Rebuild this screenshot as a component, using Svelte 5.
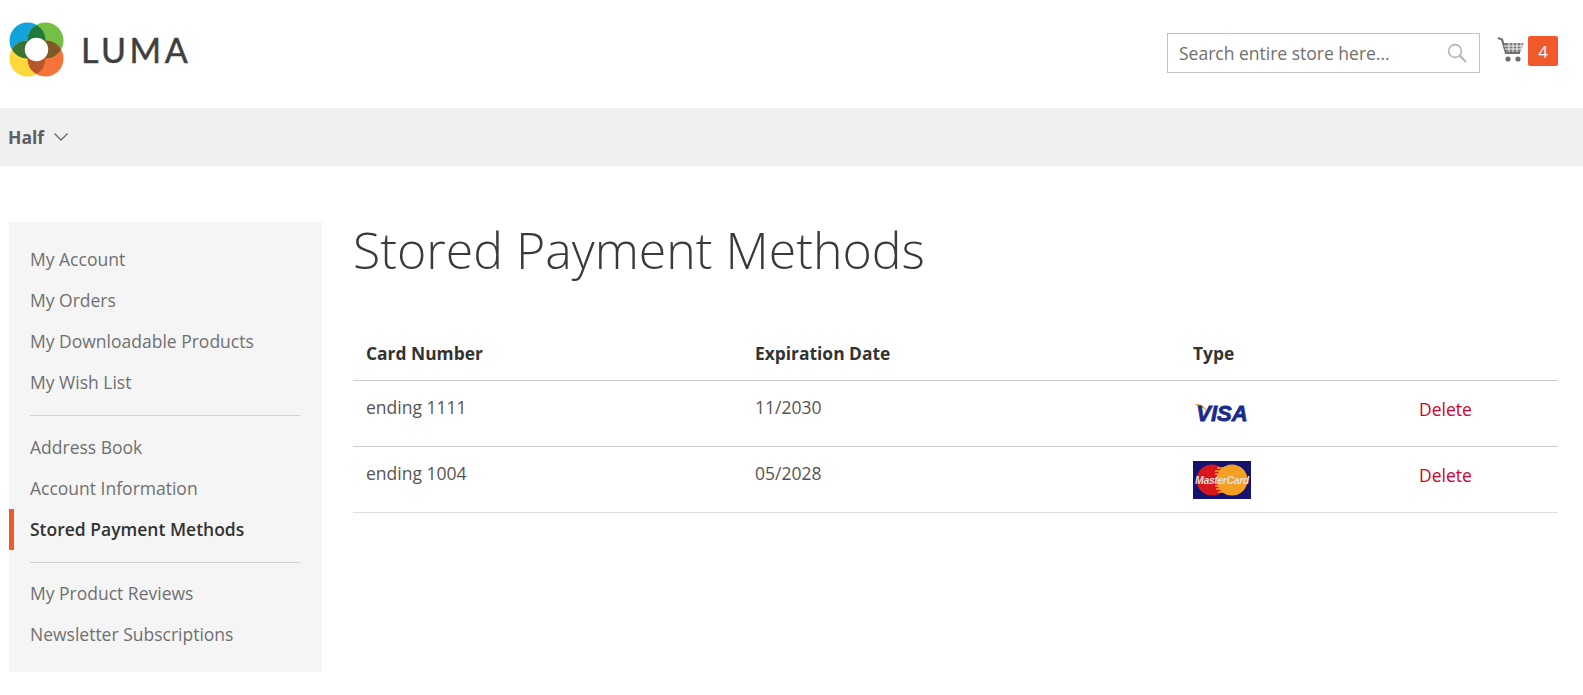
<script>
	const groups = [
		['My Account', 'My Orders', 'My Downloadable Products', 'My Wish List'],
		['Address Book', 'Account Information', 'Stored Payment Methods'],
		['My Product Reviews', 'Newsletter Subscriptions']
	]
	const current = 'Stored Payment Methods'

	const cards = [
		{ number: 'ending 1111', expires: '11/2030', type: 'visa' },
		{ number: 'ending 1004', expires: '05/2028', type: 'mc' }
	]
</script>

<header class="top">
	<a class="logo" href="#home">
		<svg class="mark" width="55" height="55" viewBox="0 0 55 55" aria-hidden="true">
			<circle cx="18.5" cy="18.5" r="18" fill="#12a3dc" />
			<circle cx="36.5" cy="18.5" r="18" fill="#74c044" />
			<circle cx="18.5" cy="36.5" r="18" fill="#fdd83a" />
			<circle cx="36.5" cy="36.5" r="18" fill="#f6733c" />
			<!-- overlaps between neighbouring circles -->
			<path d="M27.5 2.9 A18 18 0 0 1 27.5 34.1 A18 18 0 0 1 27.5 2.9 Z" fill="#1f7a3c" />
			<path d="M2.9 27.5 A18 18 0 0 1 34.1 27.5 A18 18 0 0 1 2.9 27.5 Z" fill="#3a7434" />
			<path d="M20.9 27.5 A18 18 0 0 1 52.1 27.5 A18 18 0 0 1 20.9 27.5 Z" fill="#7d5a28" />
			<path d="M27.5 20.9 A18 18 0 0 1 27.5 52.1 A18 18 0 0 1 27.5 20.9 Z" fill="#b8552a" />
			<circle cx="27.5" cy="27.5" r="11.7" fill="#fff" />
		</svg>
		<span class="wordmark">LUMA</span>
	</a>

	<div class="tools">
		<div class="search">
			<span class="placeholder">Search entire store here...</span>
			<svg width="22" height="22" viewBox="0 0 22 22" fill="none" stroke="#b5b5b5" stroke-width="1.6" aria-hidden="true">
				<circle cx="9" cy="9" r="6.4" />
				<path d="M13.8 13.8 L20 20" stroke-width="2" />
			</svg>
		</div>
		<svg class="cart" width="28" height="28" viewBox="0 0 28 28" aria-hidden="true">
			<path d="M1 2 L5 3.5 L9 17 H23" fill="none" stroke="#6f6f6f" stroke-width="2.2" />
			<path d="M6.5 7 H26.5 L24 16 H9 Z" fill="#7d7d7d" />
			<path d="M7 10 H26 M8 13 H25 M12 7 V16 M16 7 V16 M20 7 V16 M24 7 V16" stroke="#fff" stroke-width="0.9" />
			<circle cx="11" cy="23" r="2.6" fill="#6f6f6f" />
			<circle cx="21" cy="23" r="2.6" fill="#6f6f6f" />
		</svg>
		<span class="badge">4</span>
	</div>
</header>

<nav class="menu">
	<span class="menu-item">Half</span>
	<svg width="16" height="10" viewBox="0 0 16 10" fill="none" stroke="#666" stroke-width="1.3" aria-hidden="true">
		<path d="M1.5 1.5 L8 8 L14.5 1.5" />
	</svg>
</nav>

<main class="page">
	<aside class="sidebar">
		{#each groups as group, i}
			{#if i > 0}<hr />{/if}
			<ul>
				{#each group as item}
					<li class:current={item === current}>{item}</li>
				{/each}
			</ul>
		{/each}
	</aside>

	<section class="content">
		<h1>Stored Payment Methods</h1>
		<table>
			<thead>
				<tr>
					<th class="c1">Card Number</th>
					<th class="c2">Expiration Date</th>
					<th class="c3">Type</th>
					<th></th>
				</tr>
			</thead>
			<tbody>
				{#each cards as card}
					<tr>
						<td>{card.number}</td>
						<td>{card.expires}</td>
						<td class="type">
							{#if card.type === 'visa'}
								<svg width="58" height="38" viewBox="0 0 58 38" role="img" aria-label="Visa">
									<path d="M2 9 Q11 8 15 18 Q11 12 5 11.5 Z" fill="#e9a42c" />
									<text x="29" y="26" text-anchor="middle" class="visa">VISA</text>
								</svg>
							{:else}
								<svg width="58" height="38" viewBox="0 0 58 38" role="img" aria-label="MasterCard">
									<rect width="58" height="38" fill="#14146e" />
									<circle cx="19" cy="19" r="15.5" fill="#d7161d" />
									<circle cx="39" cy="19" r="15.5" fill="#f4a024" />
									<path d="M24 7 H34 M22 10 H35 M22 13 H36 M22 25 H36 M23 28 H35 M25 31 H33" stroke="#f4a024" stroke-width="1.4" />
									<text x="29" y="23" text-anchor="middle" class="mc">MasterCard</text>
								</svg>
							{/if}
						</td>
						<td class="action"><a href="#delete">Delete</a></td>
					</tr>
				{/each}
			</tbody>
		</table>
	</section>
</main>

<style>
	:global(body) {
		margin: 0;
		background: #fff;
		font-family: "Open Sans", sans-serif;
		color: #333;
	}

	.top {
		height: 108px;
		display: flex;
		align-items: center;
		justify-content: space-between;
		padding: 0 25px 0 9px;
		box-sizing: border-box;
	}
	.logo {
		display: flex;
		align-items: center;
		gap: 17px;
		text-decoration: none;
		margin-top: -10px;
	}
	.wordmark {
		font-family: Lato, sans-serif;
		font-size: 34px;
		font-weight: 400;
		letter-spacing: 3.5px;
		color: #3f3f3f;
		-webkit-text-stroke: 0.5px #3f3f3f;
	}
	.tools {
		display: flex;
		align-items: center;
		margin-top: -2px;
	}
	.search {
		width: 313px;
		height: 40px;
		box-sizing: border-box;
		border: 1px solid #c2c2c2;
		display: flex;
		align-items: center;
		justify-content: space-between;
		padding: 0 11px;
	}
	.placeholder {
		font-size: 17.5px;
		color: #6f6f6f;
	}
	.cart {
		margin-left: 17px;
		margin-top: -6px;
	}
	.badge {
		width: 30px;
		height: 30px;
		margin-left: 3px;
		margin-top: -4px;
		border-radius: 2px;
		background: #f1582a;
		color: #fff;
		font-size: 17px;
		display: flex;
		align-items: center;
		justify-content: center;
	}

	.menu {
		height: 58px;
		background: #f0f0f0;
		display: flex;
		align-items: center;
		gap: 9px;
		padding-left: 8px;
	}
	.menu-item {
		font-size: 17.5px;
		font-weight: 700;
		color: #5e5e5e;
	}

	.page {
		display: flex;
		padding: 56px 25px 0 9px;
		gap: 31px;
		align-items: flex-start;
	}

	.sidebar {
		flex: 0 0 313px;
		box-sizing: border-box;
		height: 450px;
		padding: 17px 0 16px;
		background: #f5f5f5;
		font-size: 17.5px;
		color: #707070;
	}
	.sidebar ul {
		list-style: none;
		margin: 0;
		padding: 0;
	}
	.sidebar li {
		height: 41px;
		line-height: 41px;
		padding-left: 21px;
	}
	.sidebar li.current {
		font-weight: 600;
		color: #333;
		border-left: 5px solid #f1582a;
		padding-left: 16px;
		box-sizing: border-box;
	}
	.sidebar hr {
		border: 0;
		border-top: 1px solid #d1d1d1;
		margin: 12px 22px 10.5px 21px;
	}

	.content {
		flex: 1;
		min-width: 0;
	}
	h1 {
		margin: 0 0 47px;
		font-size: 50px;
		font-weight: 300;
		line-height: 56px;
		color: #3a3a3a;
	}

	table {
		width: 100%;
		table-layout: fixed;
		border-collapse: collapse;
		font-size: 17.5px;
	}
	th {
		text-align: left;
		font-weight: 700;
		font-size: 17.4px;
		height: 55px;
		padding: 0 12px;
		border-bottom: 1px solid #ccc;
	}
	th.c1 { width: 365px; padding-left: 13px; }
	th.c2 { width: 414px; }
	th.c3 { width: 202px; }
	td {
		height: 65px;
		padding: 0 12px;
		border-bottom: 1px solid #ccc;
		vertical-align: top;
		line-height: 52px;
		color: #555;
	}
	td:first-child {
		padding-left: 13px;
	}
	tbody tr:last-child td {
		border-bottom-color: #ddd;
	}
	td.type {
		padding-top: 14px;
		height: 51px;
		line-height: 0;
	}
	td.action {
		padding-top: 2px;
		height: 63px;
	}
	td a {
		color: #d10029;
		text-decoration: none;
	}

	.visa {
		font-family: "Liberation Sans", sans-serif;
		font-size: 22px;
		font-weight: 700;
		font-style: italic;
		fill: #1a2a8c;
		stroke: #1a2a8c;
		stroke-width: 0.8px;
	}
	.mc {
		font-family: "Liberation Sans", sans-serif;
		font-size: 10.5px;
		font-weight: 700;
		font-style: italic;
		fill: #e8dcd6;
		letter-spacing: -0.4px;
	}
</style>
